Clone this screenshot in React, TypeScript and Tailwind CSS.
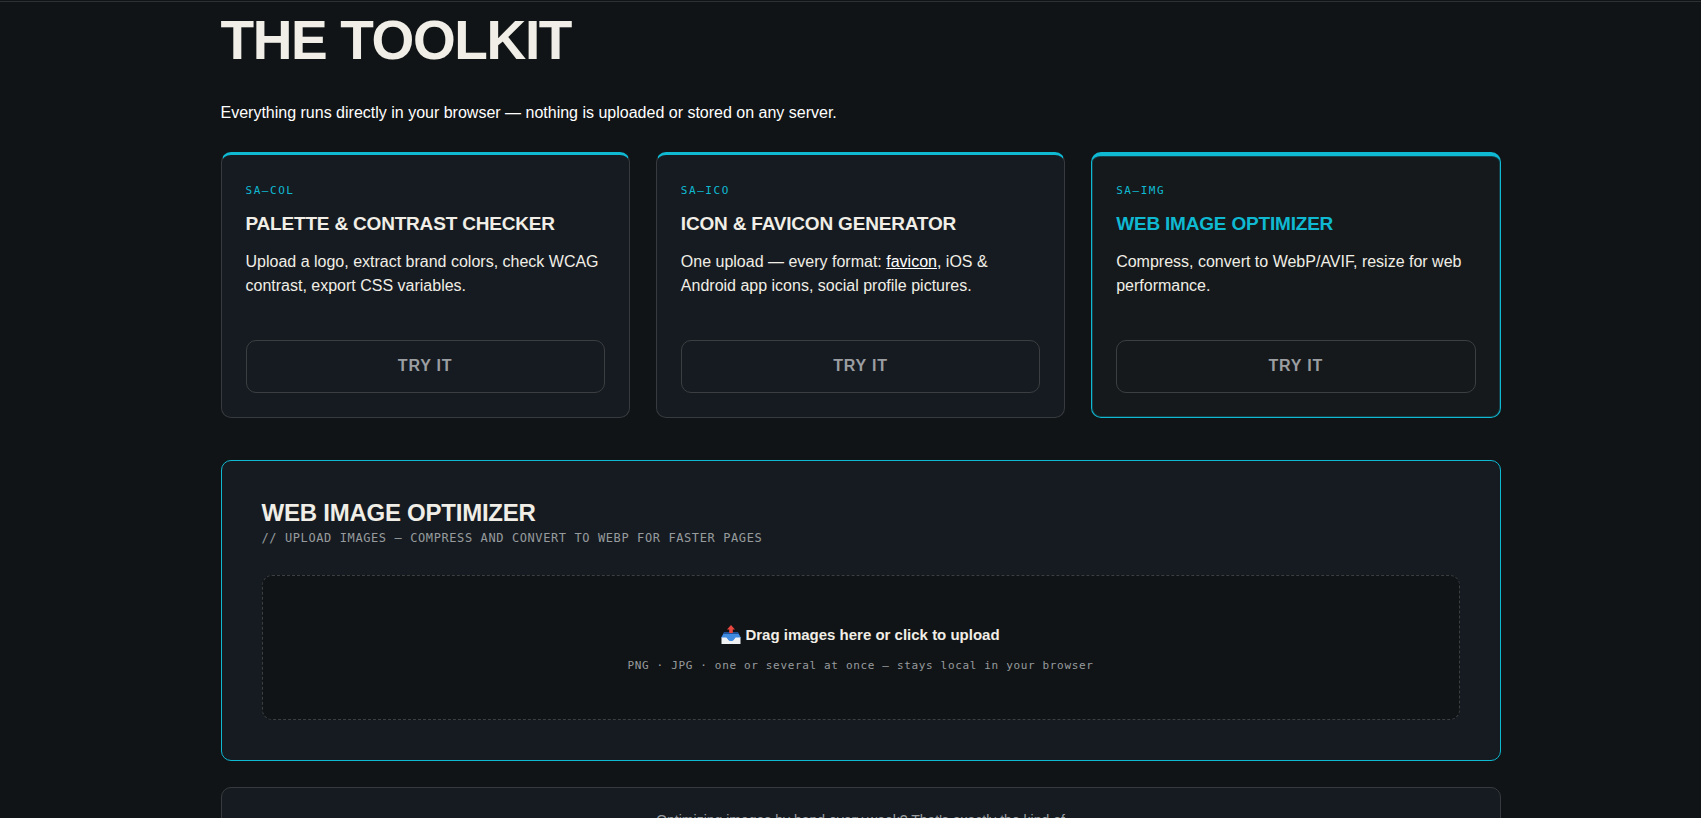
import React from "react";

type Tool = {
  code: string;
  title: string;
  description: React.ReactNode;
  active?: boolean;
};

const tools: Tool[] = [
  {
    code: "SA—COL",
    title: "PALETTE & CONTRAST CHECKER",
    description: "Upload a logo, extract brand colors, check WCAG contrast, export CSS variables.",
  },
  {
    code: "SA—ICO",
    title: "ICON & FAVICON GENERATOR",
    description: (
      <>
        One upload — every format:{" "}
        <a href="#favicon" className="text-white underline">
          favicon
        </a>
        , iOS &amp; Android app icons, social profile pictures.
      </>
    ),
  },
  {
    code: "SA—IMG",
    title: "WEB IMAGE OPTIMIZER",
    description: "Compress, convert to WebP/AVIF, resize for web performance.",
    active: true,
  },
];

const mono = "font-['DejaVu_Sans_Mono',monospace]";

function ToolCard({ code, title, description, active }: Tool) {
  return (
    <article
      className={
        "flex flex-col rounded-[10px] border px-6 pb-6 " +
        (active
          ? "border-t-4 pt-[27px] border-[#0fb9d2] bg-[#15191b] inset-shadow-[0_0_0_1px_#0fb9d240]"
          : "border-t-3 pt-7 border-[#373b3f] border-t-[#0fb9d2] bg-[#161b21]")
      }
    >
      <p className={mono + " text-[11px] leading-4 tracking-[0.14em] text-[#0fb9d2]"}>{code}</p>
      <h2
        className={
          "mt-[13px] text-[19px] font-bold leading-6 tracking-[-0.01em] " +
          (active ? "text-[#0fb9d2]" : "text-[#f0eee6]")
        }
      >
        {title}
      </h2>
      <p className="mt-[14px] text-base leading-6 text-[#f0eee6]">{description}</p>
      <button
        type="button"
        className="mt-[42px] h-[53px] rounded-[10px] border border-[#3b3f42] pb-0.5 text-base font-bold leading-6 tracking-wider text-[#9b9ea1]"
      >
        TRY IT
      </button>
    </article>
  );
}

function OutboxIcon() {
  return (
    <svg viewBox="0 0 20 20" className="size-5" aria-hidden="true">
      <path d="M3.2 7h13.6L20 13H0z" fill="#2f6fc4" />
      <path d="M3.2 7h13.6l1 2H2.200z" fill="#1f4f94" />
      <path d="M.5 12.500 2.500 9h15l2 3.500-5 1.500L12 16H8z" fill="#3f8be0" />
      <path d="M.5 12.500h4c1.200 0 1.600.6 2.200 1.500.8 1.200 1.700 2 3.300 2s2.500-.8 3.300-2c.6-.9 1-1.500 2.200-1.500h4V19H.5z" fill="#f0f1f2" />
      <path d="M6 12.500h8c-.8 1.800-2 3.500-4 3.500s-3.200-1.700-4-3.500z" fill="#3f8be0" />
      <path d="M10 0 14 4.500h-2.200V8H8.200V4.500H6z" fill="#e8473f" />
    </svg>
  );
}

export default function App() {
  return (
    <div className="h-screen overflow-hidden bg-[#111416] font-['Liberation_Sans',Arial,sans-serif] text-white">
      <div className="mt-px border-t border-[#2e3032]" />
      <main className="mx-auto box-content max-w-[1280px] pl-5">
        <h1 className="pt-2 text-[55px] font-bold leading-[60px] tracking-tight text-[#f0eee6]">THE TOOLKIT</h1>
        <p className="mt-[31px] text-base leading-6">
          Everything runs directly in your browser — nothing is uploaded or stored on any server.
        </p>

        <section className="mt-[27px] grid grid-cols-3 gap-[26px]">
          {tools.map((tool) => (
            <ToolCard key={tool.code} {...tool} />
          ))}
        </section>

        <section className="mt-[42px] rounded-[10px] border border-[#0fb9d2] bg-[#161b21] px-10 pb-10 pt-[38px]">
          <h2 className="text-[24px] font-bold leading-7 tracking-[-0.01em] text-[#f0eee6]">WEB IMAGE OPTIMIZER</h2>
          <p className={mono + " mt-px text-xs leading-5 tracking-wider text-[#979b9e]"}>
            // UPLOAD IMAGES — COMPRESS AND CONVERT TO WEBP FOR FASTER PAGES
          </p>
          <label className="mt-[27px] flex cursor-pointer flex-col items-center rounded-[10px] border border-dashed border-[#3b3f42] bg-[#111416] pb-[43px] pt-[47px]">
            <input type="file" accept="image/png,image/jpeg" multiple className="sr-only" />
            <span className="flex items-center gap-1 text-[15px] font-bold leading-6 text-[#f0eee6]">
              <OutboxIcon />
              Drag images here or click to upload
            </span>
            <span className={mono + " mt-[9px] text-[11px] leading-5 tracking-[0.06em] text-[#979b9e]"}>
              PNG · JPG · one or several at once — stays local in your browser
            </span>
          </label>
        </section>

        <section className="mt-[26px] rounded-[10px] border border-[#373b3f] bg-[#161b21] px-10 py-5 text-center">
          <p className="text-sm leading-6 text-[#9b9ea1]">
            Optimizing images by hand every week? That's exactly the kind of
          </p>
        </section>
      </main>
    </div>
  );
}
